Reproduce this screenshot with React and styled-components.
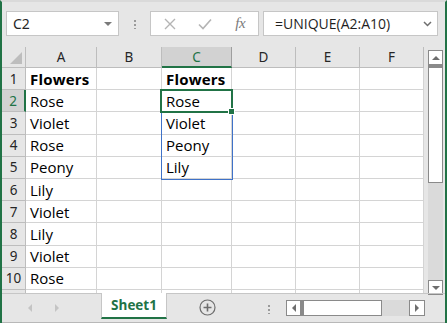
import React from 'react';
import styled, { createGlobalStyle } from 'styled-components';

const GlobalStyle = createGlobalStyle`
  html, body {
    margin: 0;
    padding: 0;
    background: #e6e6e6;
  }
`;

const GREEN = '#217346';
const COLS = ['A', 'B', 'C', 'D', 'E', 'F'];
const COL_WIDTHS = [71, 65, 70, 64, 64, 64];
const colA = ['Flowers', 'Rose', 'Violet', 'Rose', 'Peony', 'Lily', 'Violet', 'Lily', 'Violet', 'Rose'];
const colC = ['Flowers', 'Rose', 'Violet', 'Peony', 'Lily'];

const Window = styled.div`
  width: 447px;
  height: 323px;
  box-sizing: border-box;
  background: #e6e6e6;
  border-left: 2px solid ${GREEN};
  border-right: 2px solid ${GREEN};
  border-top: 2px solid #dadada;
  display: flex;
  flex-direction: column;
  overflow: hidden;
  font-family: 'Noto Sans', 'Open Sans', sans-serif;
`;

const FormulaBar = styled.div`
  height: 45px;
  display: flex;
  align-items: flex-start;
  padding: 9px 0 0 4px;
  box-sizing: border-box;
`;

const Field = styled.div`
  height: 25px;
  box-sizing: border-box;
  background: #fff;
  border: 1px solid #c6c6c6;
  display: flex;
  align-items: center;
  width: ${(p) => p.$w}px;
  margin-left: ${(p) => p.$ml || 0}px;
  font-size: 14px;
  color: #262626;
`;

const NameText = styled.span`
  flex: 1;
  padding-left: 6px;
`;

const Dots = styled.div`
  width: 2px;
  height: 10px;
  margin: 8px 0 0 15px;
  background: radial-gradient(circle, #9a9a9a 1px, transparent 1.2px) 0 0 / 2px 4px repeat-y;
`;

const IconSlot = styled.div`
  width: ${(p) => p.$w}px;
  display: flex;
  justify-content: center;
  align-items: center;
`;

const Fx = styled.span`
  font-family: 'Liberation Serif', serif;
  font-style: italic;
  font-size: 15px;
  color: #7a7a7a;
  letter-spacing: -0.5px;
`;

const FormulaText = styled.span`
  flex: 1;
  padding-left: 11px;
  font-family: 'Open Sans', 'Noto Sans', sans-serif;
  font-size: 14px;
  color: #1f1f1f;
`;

const SheetArea = styled.div`
  flex: 1;
  display: flex;
  min-height: 0;
`;

const GridWrap = styled.div`
  position: relative;
  width: 422px;
  height: 246px;
  overflow: hidden;
`;

const Grid = styled.div`
  display: grid;
  grid-template-columns: 24px ${COL_WIDTHS.map((w) => w + 'px').join(' ')};
  grid-template-rows: 21px repeat(11, 22.2px);
  background: #fff;
`;

const Corner = styled.div`
  background: #e6e6e6;
  border-right: 1px solid #bdbdbd;
  border-bottom: 1px solid #bdbdbd;
  position: relative;
  &::after {
    content: '';
    position: absolute;
    right: 3px;
    bottom: 3px;
    border-left: 12px solid transparent;
    border-bottom: 12px solid #bdbdbd;
  }
`;

const ColHead = styled.div`
  background: ${(p) => (p.$active ? '#d2d2d2' : '#e6e6e6')};
  border-right: 1px solid ${(p) => (p.$active ? '#9e9e9e' : '#bdbdbd')};
  border-bottom: ${(p) => (p.$active ? `2px solid ${GREEN}` : '1px solid #bdbdbd')};
  color: ${(p) => (p.$active ? GREEN : '#262626')};
  font-size: 13.5px;
  display: flex;
  align-items: center;
  justify-content: center;
  box-sizing: border-box;
`;

const RowHead = styled.div`
  background: ${(p) => (p.$active ? '#d2d2d2' : '#e6e6e6')};
  border-right: ${(p) => (p.$active ? `2px solid ${GREEN}` : '1px solid #bdbdbd')};
  border-bottom: 1px solid #bdbdbd;
  color: ${(p) => (p.$active ? GREEN : '#262626')};
  font-size: 13.5px;
  display: flex;
  align-items: center;
  justify-content: center;
  box-sizing: border-box;
`;

const Cell = styled.div`
  border-right: 1px solid #d4d4d4;
  border-bottom: 1px solid #d4d4d4;
  box-sizing: border-box;
  padding: 0 0 0 4px;
  display: flex;
  align-items: center;
  font-family: 'Open Sans', 'Noto Sans', sans-serif;
  font-size: 15px;
  font-weight: ${(p) => (p.$bold ? 700 : 400)};
  letter-spacing: ${(p) => (p.$bold ? '0.2px' : '0')};
  color: #000;
  white-space: nowrap;
  overflow: hidden;
`;

const SpillBox = styled.div`
  position: absolute;
  left: 159px;
  top: 43px;
  width: 72px;
  height: 90px;
  box-sizing: border-box;
  border: 1px solid #3f72c8;
  pointer-events: none;
`;

const ActiveCell = styled.div`
  position: absolute;
  left: 158px;
  top: 42px;
  width: 73px;
  height: 24px;
  box-sizing: border-box;
  border: 2px solid ${GREEN};
  pointer-events: none;
  &::after {
    content: '';
    position: absolute;
    right: -4px;
    bottom: -4px;
    width: 5px;
    height: 5px;
    background: ${GREEN};
    border: 1px solid #fff;
  }
`;

const VScroll = styled.div`
  margin: 3px 0 0 4px;
  width: 15px;
  height: 245px;
  display: flex;
  flex-direction: column;
  background: #dadada;
`;

const ScrollBtn = styled.div`
  width: ${(p) => p.$w || 15}px;
  height: ${(p) => p.$h || 15}px;
  box-sizing: border-box;
  background: #fff;
  border: 1px solid #8a8a8a;
  display: flex;
  align-items: center;
  justify-content: center;
  flex-shrink: 0;
`;

const VThumb = styled.div`
  height: 118px;
  box-sizing: border-box;
  background: #fff;
  border: 1px solid #8a8a8a;
  border-top: 3px solid #8a8a8a;
`;

const Spacer = styled.div`
  flex: 1;
`;

const TabBar = styled.div`
  height: 30px;
  border-top: 1px solid #c6c6c6;
  border-bottom: 1px solid #b8b8b8;
  box-sizing: border-box;
  display: flex;
  align-items: flex-start;
`;

const NavArrows = styled.div`
  width: 99px;
  height: 28px;
  display: flex;
  align-items: center;
  padding-left: 26px;
  gap: 23px;
  box-sizing: border-box;
`;

const Tab = styled.div`
  width: 64px;
  height: 24px;
  margin-top: -1px;
  background: #fff;
  border-left: 1px solid #c6c6c6;
  border-right: 1px solid #c6c6c6;
  border-bottom: 2px solid ${GREEN};
  box-sizing: content-box;
  display: flex;
  align-items: center;
  justify-content: center;
  color: ${GREEN};
  font-family: 'Open Sans', 'Noto Sans', sans-serif;
  font-weight: 700;
  font-size: 13.5px;
`;

const AddSheet = styled.div`
  margin: 5px 0 0 32px;
  display: flex;
`;

const TabDots = styled(Dots)`
  margin: 10px 0 0 52px;
`;

const HScroll = styled.div`
  margin: 6px 0 0 16px;
  width: 139px;
  height: 16px;
  display: flex;
  background: #dadada;
`;

const HThumb = styled.div`
  width: 81px;
  box-sizing: border-box;
  background: #fff;
  border: 1px solid #8a8a8a;
  border-left: 3px solid #8a8a8a;
`;

const Tri = ({ dir, color = '#6e6e6e', size = 4 }) => {
  const s = size;
  const pts = {
    up: `0,${s} ${s * 2},${s} ${s},0`,
    down: `0,0 ${s * 2},0 ${s},${s}`,
    left: `${s},0 ${s},${s * 2} 0,${s}`,
    right: `0,0 0,${s * 2} ${s},${s}`,
  }[dir];
  const horiz = dir === 'left' || dir === 'right';
  return (
    <svg width={horiz ? s : s * 2} height={horiz ? s * 2 : s}>
      <polygon points={pts} fill={color} />
    </svg>
  );
};

export default function App() {
  const rows = Array.from({ length: 11 }, (_, i) => i + 1);
  return (
    <>
      <GlobalStyle />
      <Window>
        <FormulaBar>
          <Field $w={113}>
            <NameText>C2</NameText>
            <IconSlot $w={20}>
              <Tri dir="down" color="#7a7a7a" />
            </IconSlot>
          </Field>
          <Dots />
          <Field $w={109} $ml={14}>
            <IconSlot $w={38}>
              <svg width="12" height="12" viewBox="0 0 12 12">
                <path d="M1 1 L11 11 M11 1 L1 11" stroke="#b4b4b4" strokeWidth="1.4" fill="none" />
              </svg>
            </IconSlot>
            <IconSlot $w={34}>
              <svg width="14" height="12" viewBox="0 0 14 12">
                <path d="M1 6.5 L5 10.5 L13 1.5" stroke="#b4b4b4" strokeWidth="1.6" fill="none" />
              </svg>
            </IconSlot>
            <IconSlot $w={36}>
              <Fx>fx</Fx>
            </IconSlot>
          </Field>
          <Field $w={175} $ml={4}>
            <FormulaText>=UNIQUE(A2:A10)</FormulaText>
            <IconSlot $w={20}>
              <svg width="9" height="6" viewBox="0 0 9 6">
                <path d="M1 1 L4.5 4.5 L8 1" stroke="#6e6e6e" strokeWidth="1.5" fill="none" />
              </svg>
            </IconSlot>
          </Field>
        </FormulaBar>

        <SheetArea>
          <GridWrap>
            <Grid>
              <Corner />
              {COLS.map((c) => (
                <ColHead key={c} $active={c === 'C'}>
                  {c}
                </ColHead>
              ))}
              {rows.map((r) => (
                <React.Fragment key={r}>
                  <RowHead $active={r === 2}>{r <= 10 ? r : ''}</RowHead>
                  {COLS.map((c) => {
                    let val = '';
                    if (c === 'A') val = colA[r - 1] || '';
                    if (c === 'C') val = colC[r - 1] || '';
                    return (
                      <Cell key={c} $bold={r === 1}>
                        {val}
                      </Cell>
                    );
                  })}
                </React.Fragment>
              ))}
            </Grid>
            <SpillBox />
            <ActiveCell />
          </GridWrap>
          <VScroll>
            <ScrollBtn>
              <Tri dir="up" />
            </ScrollBtn>
            <VThumb />
            <Spacer />
            <ScrollBtn>
              <Tri dir="down" />
            </ScrollBtn>
          </VScroll>
        </SheetArea>

        <TabBar>
          <NavArrows>
            <Tri dir="left" color="#c4c4c4" />
            <Tri dir="right" color="#c4c4c4" />
          </NavArrows>
          <Tab>Sheet1</Tab>
          <AddSheet>
            <svg width="17" height="17" viewBox="0 0 17 17">
              <circle cx="8.5" cy="8.5" r="7.5" stroke="#6e6e6e" strokeWidth="1.2" fill="none" />
              <path d="M8.5 4.5 V12.5 M4.5 8.5 H12.5" stroke="#6e6e6e" strokeWidth="1.6" />
            </svg>
          </AddSheet>
          <TabDots />
          <HScroll>
            <ScrollBtn $w={15} $h={16}>
              <Tri dir="left" />
            </ScrollBtn>
            <HThumb />
            <Spacer />
            <ScrollBtn $w={16} $h={16}>
              <Tri dir="right" />
            </ScrollBtn>
          </HScroll>
        </TabBar>
      </Window>
    </>
  );
}
